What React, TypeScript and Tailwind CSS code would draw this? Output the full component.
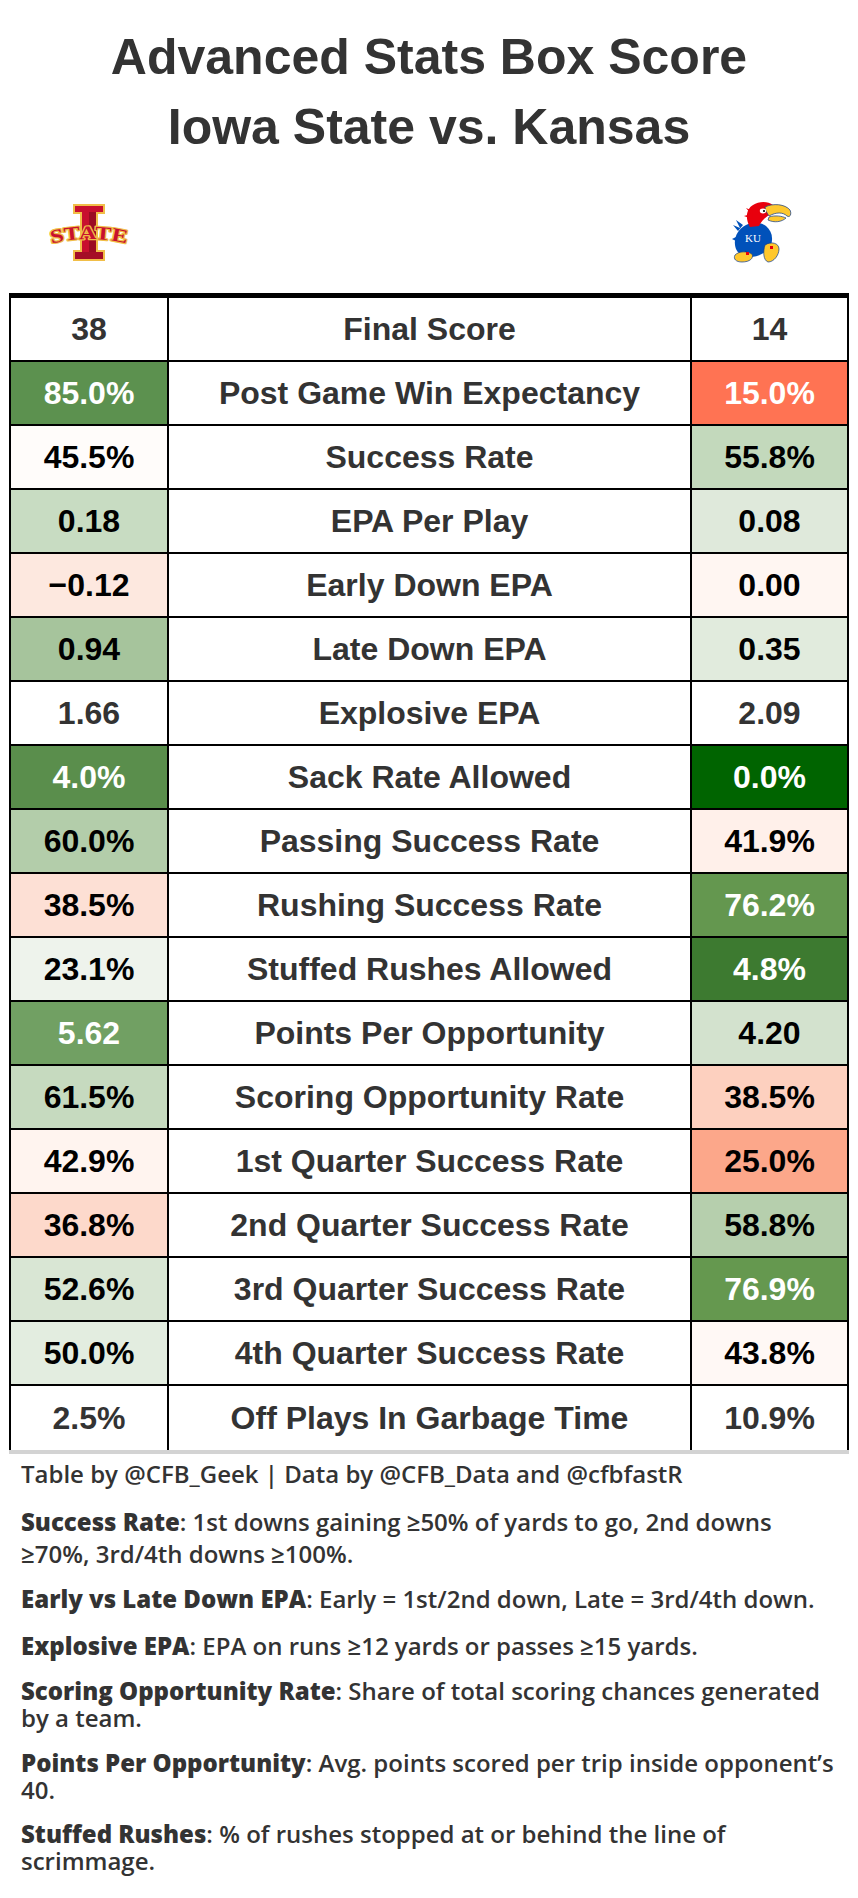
import React from "react";

type Row = {
  l: string;
  lb?: string;
  lt?: string;
  label: string;
  r: string;
  rb?: string;
  rt?: string;
};

const rows: Row[] = [
  { l: "38", label: "Final Score", r: "14" },
  { l: "85.0%", lb: "#5c914f", lt: "#ffffff", label: "Post Game Win Expectancy", r: "15.0%", rb: "#ff7353", rt: "#ffffff" },
  { l: "45.5%", lb: "#fffcfa", lt: "#000000", label: "Success Rate", r: "55.8%", rb: "#c3d9bc", rt: "#000000" },
  { l: "0.18", lb: "#c8dcc2", lt: "#000000", label: "EPA Per Play", r: "0.08", rb: "#dfe9db", rt: "#000000" },
  { l: "\u22120.12", lb: "#fde8df", lt: "#000000", label: "Early Down EPA", r: "0.00", rb: "#fff6f2", rt: "#000000" },
  { l: "0.94", lb: "#a6c49c", lt: "#000000", label: "Late Down EPA", r: "0.35", rb: "#e1ebdd", rt: "#000000" },
  { l: "1.66", label: "Explosive EPA", r: "2.09" },
  { l: "4.0%", lb: "#5a8e4c", lt: "#ffffff", label: "Sack Rate Allowed", r: "0.0%", rb: "#006400", rt: "#ffffff" },
  { l: "60.0%", lb: "#b3cdaa", lt: "#000000", label: "Passing Success Rate", r: "41.9%", rb: "#fff0ea", rt: "#000000" },
  { l: "38.5%", lb: "#fde0d5", lt: "#000000", label: "Rushing Success Rate", r: "76.2%", rb: "#64974f", rt: "#ffffff" },
  { l: "23.1%", lb: "#eef3ec", lt: "#000000", label: "Stuffed Rushes Allowed", r: "4.8%", rb: "#3d7a30", rt: "#ffffff" },
  { l: "5.62", lb: "#71a063", lt: "#ffffff", label: "Points Per Opportunity", r: "4.20", rb: "#d3e2ce", rt: "#000000" },
  { l: "61.5%", lb: "#c6dabf", lt: "#000000", label: "Scoring Opportunity Rate", r: "38.5%", rb: "#fdd0bf", rt: "#000000" },
  { l: "42.9%", lb: "#fff4ef", lt: "#000000", label: "1st Quarter Success Rate", r: "25.0%", rb: "#fca78a", rt: "#000000" },
  { l: "36.8%", lb: "#fdd9cb", lt: "#000000", label: "2nd Quarter Success Rate", r: "58.8%", rb: "#b6cfad", rt: "#000000" },
  { l: "52.6%", lb: "#d9e6d4", lt: "#000000", label: "3rd Quarter Success Rate", r: "76.9%", rb: "#65984f", rt: "#ffffff" },
  { l: "50.0%", lb: "#e3ede0", lt: "#000000", label: "4th Quarter Success Rate", r: "43.8%", rb: "#fff8f5", rt: "#000000" },
  { l: "2.5%", label: "Off Plays In Garbage Time", r: "10.9%" },
];

function IowaStateLogo() {
  return (
    <svg width="80" height="60" viewBox="0 0 80 60">
      <path d="M24 1 H56 V11 H49 V47 H56 V58 H24 V47 H31 V11 H24 Z" fill="#f1be48" />
      <path d="M26 3 H54 V9 H47 V49 H54 V56 H26 V49 H33 V9 H26 Z" fill="#c8102e" />
      <path d="M40 9 H47 V49 H40 Z" fill="#9b0c23" />
      <path d="M26 49 H54 V56 H26 Z" fill="#a50d26" />
      <defs>
        <path id="isuArc" d="M1 41 Q40 31 79 41" />
      </defs>
      <text
        fontFamily="'Liberation Serif', serif"
        fontWeight="bold"
        fontSize="19"
        fill="#c8102e"
        stroke="#f1be48"
        strokeWidth="2.4"
        paintOrder="stroke"
        strokeLinejoin="round"
      >
        <textPath href="#isuArc" startOffset="50%" textAnchor="middle" textLength="76" lengthAdjust="spacingAndGlyphs">
          STATE
        </textPath>
      </text>
    </svg>
  );
}

function KansasLogo() {
  return (
    <svg width="60" height="64" viewBox="0 0 60 64">
      <path d="M14 24 C6 28 2 36 3 44 C4 52 10 56 18 56 C26 56 34 52 38 46 C42 38 40 30 34 25 C28 21 20 21 14 24 Z" fill="#0051ba" />
      <path d="M6 30 L1 24 L8 27 L4 19 L11 24 Z" fill="#0051ba" />
      <path d="M4 40 L0 38 L4 36 Z" fill="#0051ba" />
      <path d="M18 26 C13 18 14 8 21 4 C27 0 36 0 41 4 L40 12 C35 15 30 19 27 25 Z" fill="#e8000d" />
      <path d="M21 10 L14 7 L19 13 L12 15 L20 18 Z" fill="#e8000d" />
      <path d="M33 6 C41 2 53 3 58 9 C60 13 58 17 55 15 C51 11 44 11 37 15 C35 12 33 9 33 6 Z" fill="#ffc82d" stroke="#0b3a8f" strokeWidth="0.7" />
      <path d="M37 16 C43 14 50 15 54 17 C50 21 42 22 36 19 Z" fill="#ffc82d" stroke="#0b3a8f" strokeWidth="0.7" />
      <ellipse cx="31" cy="10" rx="3.2" ry="2.4" fill="#ffffff" />
      <circle cx="32" cy="10" r="1.1" fill="#000" />
      <text x="21" y="41" textAnchor="middle" fontFamily="'Liberation Serif', serif" fontSize="11" fill="#ffffff">KU</text>
      <path d="M14 50 L12 54" stroke="#0b3a8f" strokeWidth="1.5" />
      <path d="M3 54 C7 50 15 50 20 53 C22 57 18 61 10 61 C4 61 1 58 3 54 Z" fill="#ffc82d" stroke="#0b3a8f" strokeWidth="0.7" />
      <path d="M33 44 C39 40 47 42 47 48 C47 54 42 61 36 61 C31 59 31 50 33 44 Z" fill="#ffc82d" stroke="#0b3a8f" strokeWidth="0.7" />
      <rect x="14" y="51" width="3" height="3" fill="#e8000d" />
      <rect x="38" y="45" width="3" height="3" fill="#e8000d" />
    </svg>
  );
}

function Cell({ text, bg, color, width }: { text: string; bg?: string; color?: string; width: string }) {
  return (
    <div
      className={`${width} h-full flex items-center justify-center`}
      style={{ backgroundColor: bg ?? "#ffffff", color: color ?? "#333333" }}
    >
      {text}
    </div>
  );
}

export default function App() {
  return (
    <div className="w-[858px] bg-white text-[#333333]" style={{ fontFamily: "'Liberation Sans', Arial, sans-serif" }}>
      <div className="pt-[22px] text-center text-[50px] leading-[70px] font-bold text-[#333333]">
        <div>Advanced Stats Box Score</div>
        <div>Iowa State vs. Kansas</div>
      </div>

      <div className="mx-auto mt-[41px] mb-[30px] flex h-[60px] w-[840px] items-center justify-between">
        <div className="flex w-[159px] justify-center">
          <IowaStateLogo />
        </div>
        <div className="flex w-[159px] justify-center pr-[16px]">
          <KansasLogo />
        </div>
      </div>

      <div className="mx-auto w-[840px] border-x-2 border-t-[5px] border-black text-[32px] font-bold">
        {rows.map((row, i) => (
          <div
            key={i}
            className={`flex h-[64px] ${i === rows.length - 1 ? "" : "border-b-2 border-black"}`}
          >
            <Cell text={row.l} bg={row.lb} color={row.lt} width="w-[156px]" />
            <div className="flex h-full flex-1 items-center justify-center border-x-2 border-black text-[#333333]">
              {row.label}
            </div>
            <Cell text={row.r} bg={row.rb} color={row.rt} width="w-[155px]" />
          </div>
        ))}
      </div>
      <div className="mx-auto h-[4px] w-[840px] bg-[#d3d3d3]" />

      <div
        className="mx-auto w-[840px] px-[12px] pt-[6px] pb-[24px] text-[24px] leading-[27px] font-semibold text-[#333333]"
        style={{ fontFamily: "'Open Sans', 'Liberation Sans', sans-serif" }}
      >
        <p>Table by @CFB_Geek | Data by @CFB_Data and @cfbfastR</p>
        <p className="mt-[19px] leading-[32px]">
          <span className="font-extrabold">Success Rate</span>: 1st downs gaining ≥50% of yards to go, 2nd downs ≥70%, 3rd/4th downs ≥100%.
        </p>
        <p className="mt-[15px]">
          <span className="font-extrabold">Early vs Late Down EPA</span>: Early = 1st/2nd down, Late = 3rd/4th down.
        </p>
        <p className="mt-[20px]">
          <span className="font-extrabold">Explosive EPA</span>: EPA on runs ≥12 yards or passes ≥15 yards.
        </p>
        <p className="mt-[18px]">
          <span className="font-extrabold">Scoring Opportunity Rate</span>: Share of total scoring chances generated by a team.
        </p>
        <p className="mt-[18px]">
          <span className="font-extrabold">Points Per Opportunity</span>: Avg. points scored per trip inside opponent’s 40.
        </p>
        <p className="mt-[17px]">
          <span className="font-extrabold">Stuffed Rushes</span>: % of rushes stopped at or behind the line of scrimmage.
        </p>
      </div>
    </div>
  );
}
